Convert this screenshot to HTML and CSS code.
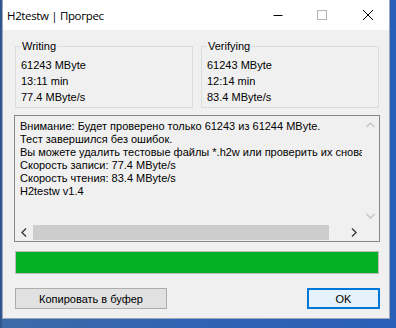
FILE: index.html
```html
<!DOCTYPE html>
<html lang="ru">
<head>
<meta charset="utf-8">
<title>H2testw | Прогрес</title>
<link rel="stylesheet" href="styles.css">
</head>
<body>
<div class="window">
  <div class="titlebar">
    <span class="title">H2testw | Прогрес</span>
    <div class="controls">
      <span class="ctl ctl-min">
        <svg width="12" height="12" viewBox="0 0 12 12"><path d="M1.5 6.5h9" stroke="#000" stroke-width="1"/></svg>
      </span>
      <span class="ctl ctl-max">
        <svg width="12" height="12" viewBox="0 0 12 12"><rect x="1.5" y="1.5" width="9" height="9" fill="none" stroke="#b5b5b5" stroke-width="1"/></svg>
      </span>
      <span class="ctl ctl-close">
        <svg width="12" height="12" viewBox="0 0 12 12"><path d="M1 1L11 11M11 1L1 11" stroke="#000" stroke-width="1"/></svg>
      </span>
    </div>
  </div>
  <div class="client">
    <div class="groups">
      <div class="group">
        <span class="legend">Writing</span>
        <div class="line">61243 MByte</div>
        <div class="line">13:11 min</div>
        <div class="line">77.4 MByte/s</div>
      </div>
      <div class="group">
        <span class="legend">Verifying</span>
        <div class="line">61243 MByte</div>
        <div class="line">12:14 min</div>
        <div class="line">83.4 MByte/s</div>
      </div>
    </div>
    <div class="edit">
      <div class="edit-text">
        <div>Внимание: Будет проверено только 61243 из 61244 MByte.</div>
        <div>Тест завершился без ошибок.</div>
        <div>Вы можете удалить тестовые файлы *.h2w или проверить их снова</div>
        <div>Скорость записи: 77.4 MByte/s</div>
        <div>Скорость чтения: 83.4 MByte/s</div>
        <div>H2testw v1.4</div>
      </div>
      <div class="vscroll">
        <span class="sbtn">
          <svg width="9" height="6" viewBox="0 0 9 6"><path d="M0.5 5L4.5 1L8.5 5" fill="none" stroke="#c4c4c4" stroke-width="1.3"/></svg>
        </span>
        <span class="vtrack"></span>
        <span class="sbtn">
          <svg width="9" height="6" viewBox="0 0 9 6"><path d="M0.5 1L4.5 5L8.5 1" fill="none" stroke="#c4c4c4" stroke-width="1.3"/></svg>
        </span>
      </div>
      <div class="hscroll">
        <span class="sbtn">
          <svg width="6" height="9" viewBox="0 0 6 9"><path d="M5 0.5L1 4.5L5 8.5" fill="none" stroke="#3c3c3c" stroke-width="1.4"/></svg>
        </span>
        <span class="htrack"><span class="thumb"></span></span>
        <span class="sbtn">
          <svg width="6" height="9" viewBox="0 0 6 9"><path d="M1 0.5L5 4.5L1 8.5" fill="none" stroke="#3c3c3c" stroke-width="1.4"/></svg>
        </span>
      </div>
      <div class="corner"></div>
    </div>
    <div class="progress"><div class="fill" style="width:100%"></div></div>
    <div class="buttons">
      <button class="btn copy">Копировать в буфер</button>
      <button class="btn ok">OK</button>
    </div>
  </div>
</div>
</body>
</html>
```
FILE: styles.css
```css
html, body {
  margin: 0;
  padding: 0;
}
body {
  width: 396px;
  height: 328px;
  overflow: hidden;
  background: linear-gradient(90deg, #2a4f86 0px, #3d6aa8 3px, #2f63b3 50%, #2a5fb8 100%);
  font-family: "Liberation Sans", Arial, sans-serif;
  font-size: 11px;
  color: #000;
}
.window {
  margin-left: 2px;
  width: 388px;
  height: 319px;
  box-sizing: border-box;
  border: 1px solid #9aa6b8;
  border-top: none;
  background: #f0f0f0;
  display: flex;
  flex-direction: column;
}
.titlebar {
  height: 30px;
  flex: none;
  background: #fff;
  display: flex;
  align-items: center;
  justify-content: space-between;
}
.title {
  padding-left: 4px;
  font-family: "Open Sans", "Noto Sans", sans-serif;
  font-size: 11.5px;
  letter-spacing: -0.35px;
  color: #000;
}
.controls {
  display: flex;
  align-items: center;
  height: 100%;
  padding-right: 15px;
}
.ctl {
  display: flex;
  width: 12px;
  height: 12px;
}
.ctl-max {
  margin-left: 32px;
}
.ctl-close {
  margin-left: 34px;
}
.client {
  flex: 1;
  display: flex;
  flex-direction: column;
  padding: 0 9px 0 11px;
}
.groups {
  display: flex;
  gap: 8px;
  margin-top: 16px;
  padding-left: 1px;
}
.group {
  box-sizing: border-box;
  height: 62px;
  width: 178px;
  border: 1px solid #dcdcdc;
  padding-left: 5px;
}
.legend {
  display: block;
  width: fit-content;
  margin: -9px 0 3px 0;
  padding: 0 1px;
  background: #f0f0f0;
  line-height: 16px;
}
.line {
  line-height: 16px;
  white-space: nowrap;
}
.edit {
  margin-top: 7px;
  box-sizing: border-box;
  height: 127px;
  width: 366px;
  border: 1px solid #828790;
  background: #f0f0f0;
  display: grid;
  grid-template-columns: 1fr 17px;
  grid-template-rows: 1fr 17px;
}
.edit-text {
  overflow: hidden;
  white-space: nowrap;
  padding: 4px 0 0 5px;
  line-height: 13px;
}
.vscroll {
  display: flex;
  flex-direction: column;
}
.vtrack {
  flex: 1;
}
.sbtn {
  width: 17px;
  height: 17px;
  flex: none;
  display: flex;
  align-items: center;
  justify-content: center;
}
.hscroll {
  display: flex;
  align-items: center;
}
.htrack {
  flex: 1;
  height: 17px;
  display: flex;
  align-items: center;
}
.thumb {
  display: block;
  width: 296px;
  height: 15px;
  margin-left: 1px;
  background: #cdcdcd;
}
.corner {
  background: #f0f0f0;
}
.progress {
  margin-top: 9px;
  margin-left: 1px;
  box-sizing: border-box;
  width: 364px;
  height: 23px;
  border: 1px solid #bcbcbc;
  background: #e6e6e6;
}
.fill {
  height: 100%;
  background: #06b025;
}
.buttons {
  display: flex;
  justify-content: space-between;
  margin-top: 14px;
  padding-left: 1px;
}
.btn {
  box-sizing: border-box;
  height: 21px;
  font-family: "Liberation Sans", Arial, sans-serif;
  font-size: 11px;
  color: #000;
  background: #e1e1e1;
  border: 1px solid #adadad;
  padding: 0;
  margin: 0;
}
.copy {
  width: 152px;
}
.ok {
  width: 73px;
  border: 1px solid #0078d7;
  box-shadow: inset 0 0 0 1px #0078d7;
  background: #e5f1fb;
}
```
